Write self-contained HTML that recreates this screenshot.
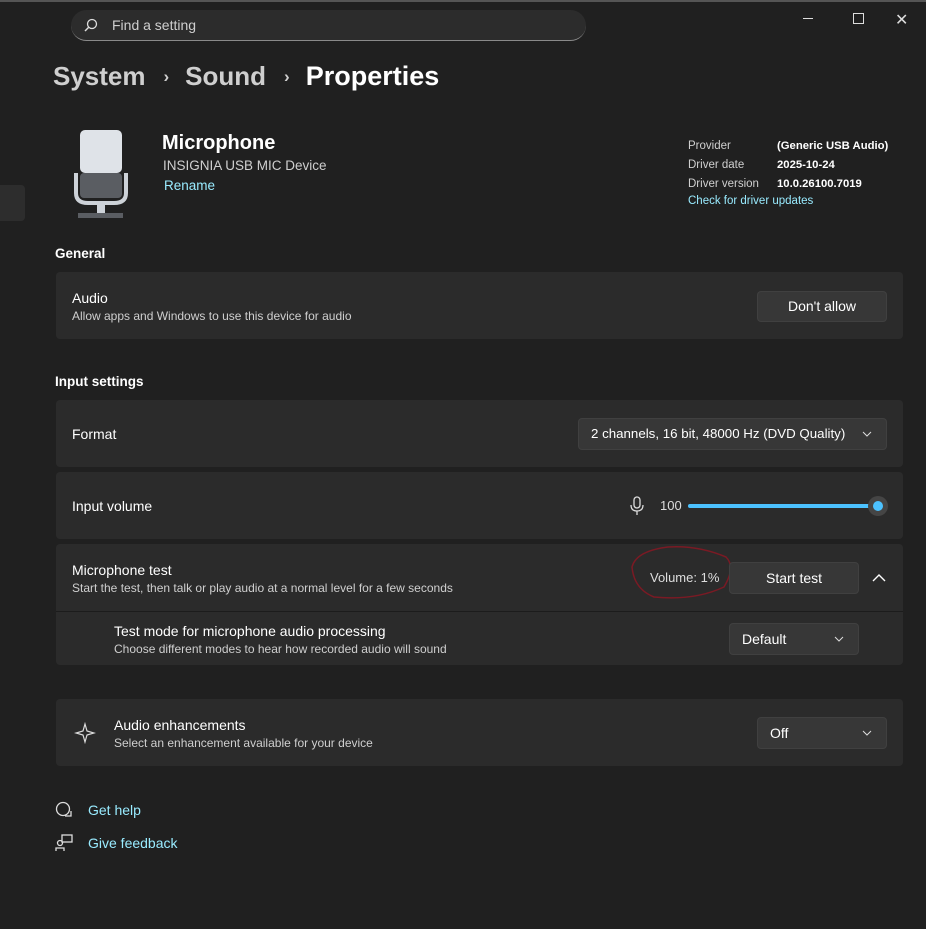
<!DOCTYPE html>
<html><head><style>
body{margin:0;width:926px;height:929px;background:#202020;font-family:"Segoe UI","Liberation Sans",sans-serif;color:#fff;position:relative;overflow:hidden}
.a{position:absolute}
.card{position:absolute;left:56px;width:847px;background:#2b2b2b;border-radius:4px}
.t{font-size:14px;color:#fff}
.s{font-size:12px;color:#cfcfcf}
.btn{position:absolute;background:#373737;border:1px solid #404040;border-radius:4px;font-size:14px;color:#fff;box-sizing:border-box}
.link{color:#99ebff}
.chev{position:absolute;right:14px;top:12px}
</style></head><body>
<div class="a" style="top:0;left:0;width:926px;height:2px;background:#555"></div>
<div class="a" style="left:71px;top:10px;width:515px;height:31px;background:#2c2c2c;border-radius:16px;border-bottom:1px solid #8a8a8a;box-sizing:border-box"></div>
<svg class="a" style="left:84px;top:18px" width="14" height="14"><circle cx="8" cy="6" r="4.5" stroke="#ddd" stroke-width="1.3" fill="none"/><line x1="4.6" y1="9.4" x2="1" y2="13" stroke="#ddd" stroke-width="1.5"/></svg>
<div class="a" style="left:112px;top:17px;font-size:14px;color:#cfcfcf">Find a setting</div>
<div class="a" style="left:803px;top:18px;width:10px;height:1px;background:#ddd"></div>
<div class="a" style="left:853px;top:13px;width:9px;height:9px;border:1px solid #ddd"></div>
<div class="a" style="left:895px;top:10px;font-size:16px;color:#ddd">✕</div>
<div class="a" style="left:53px;top:61px;font-size:26px;font-weight:600;color:#cfcfcf;white-space:nowrap">System<span style="font-size:17px;margin:0 16px 0 18px;vertical-align:3px">›</span>Sound<span style="font-size:17px;margin:0 16px 0 18px;vertical-align:3px">›</span><span style="color:#fff;font-size:27px">Properties</span></div>
<div class="a" style="left:0;top:185px;width:25px;height:36px;background:#2d2d2d;border-radius:0 4px 4px 0"></div>
<svg class="a" style="left:73px;top:128px" width="56" height="92"><rect x="7" y="2" width="42" height="43" rx="5" fill="#dfe3e8"/><rect x="7" y="45" width="42" height="25" rx="4" fill="#5a5d62"/><path d="M3 45 v20 q0 10 12 10 h26 q12 0 12 -10 v-20" stroke="#cdd2d8" stroke-width="4" fill="none"/><rect x="24" y="75" width="8" height="10" fill="#cdd2d8"/><rect x="5" y="85" width="45" height="5" fill="#5a5d62"/></svg>
<div class="a" style="left:162px;top:132px;font-size:20px;font-weight:600">Microphone</div>
<div class="a" style="left:163px;top:158px;font-size:13.5px;color:#cfcfcf">INSIGNIA USB MIC Device</div>
<div class="a link" style="left:164px;top:178px;font-size:13.5px">Rename</div>
<div class="a" style="left:688px;top:137px;line-height:19px;font-size:11.5px;color:#cfcfcf">Provider<br>Driver date<br>Driver version</div>
<div class="a" style="left:777px;top:137px;line-height:19px;font-size:11.3px;font-weight:600">(Generic USB Audio)<br>2025-10-24<br>10.0.26100.7019</div>
<div class="a link" style="left:688px;top:195px;font-size:11.5px">Check for driver updates</div>
<div class="a" style="left:55px;top:246px;font-size:13.5px;font-weight:600">General</div>
<div class="card" style="top:272px;height:67px"></div>
<div class="a t" style="left:72px;top:290px">Audio</div>
<div class="a s" style="left:72px;top:309px">Allow apps and Windows to use this device for audio</div>
<div class="btn" style="left:757px;top:291px;width:130px;height:31px;text-align:center;line-height:29px">Don't allow</div>
<div class="a" style="left:55px;top:374px;font-size:13.5px;font-weight:600">Input settings</div>
<div class="card" style="top:400px;height:67px"></div>
<div class="a t" style="left:72px;top:426px">Format</div>
<div class="btn" style="left:578px;top:418px;width:309px;height:32px;line-height:30px;padding-left:12px;font-size:13.3px">2 channels, 16 bit, 48000 Hz (DVD Quality)<svg class="chev" width="10" height="6"><path d="M1 1 L5 5 L9 1" stroke="#ddd" fill="none"/></svg></div>
<div class="card" style="top:472px;height:67px"></div>
<div class="a t" style="left:72px;top:498px">Input volume</div>
<svg class="a" style="left:629px;top:496px" width="16" height="20"><rect x="5" y="1" width="6" height="11" rx="3" stroke="#ddd" stroke-width="1.3" fill="none"/><path d="M2 9 q0 6 6 6 q6 0 6 -6 M8 15 v4" stroke="#ddd" stroke-width="1.3" fill="none"/></svg>
<div class="a" style="left:660px;top:498px;font-size:13px;color:#ddd">100</div>
<div class="a" style="left:688px;top:504px;width:190px;height:4px;background:#4cc2ff;border-radius:2px"></div>
<div class="a" style="left:868px;top:496px;width:20px;height:20px;border-radius:50%;background:#454545"></div>
<div class="a" style="left:873px;top:501px;width:10px;height:10px;border-radius:50%;background:#4cc2ff"></div>
<div class="card" style="top:544px;height:121px"></div>
<div class="a" style="left:56px;top:611px;width:847px;height:1px;background:#1c1c1c"></div>
<div class="a t" style="left:72px;top:562px">Microphone test</div>
<div class="a s" style="left:72px;top:581px">Start the test, then talk or play audio at a normal level for a few seconds</div>
<svg class="a" style="left:628px;top:543px" width="110" height="62"><path d="M40 4 q30 -2 58 10 q10 10 -2 30 q-30 14 -70 10 q-20 -8 -22 -30 q4 -16 36 -20z" stroke="#7a1a24" stroke-width="1.5" fill="none"/></svg>
<div class="a" style="left:650px;top:570px;font-size:13px;color:#ddd">Volume: 1%</div>
<div class="btn" style="left:729px;top:562px;width:130px;height:32px;text-align:center;line-height:30px">Start test</div>
<svg class="a" style="left:872px;top:574px" width="14" height="8"><path d="M1 7 L7 1 L13 7" stroke="#fff" stroke-width="1.4" fill="none"/></svg>
<div class="a t" style="left:114px;top:623px">Test mode for microphone audio processing</div>
<div class="a s" style="left:114px;top:642px">Choose different modes to hear how recorded audio will sound</div>
<div class="btn" style="left:729px;top:623px;width:130px;height:32px;line-height:30px;padding-left:12px">Default<svg class="chev" width="10" height="6"><path d="M1 1 L5 5 L9 1" stroke="#ddd" fill="none"/></svg></div>
<div class="card" style="top:699px;height:67px"></div>
<svg class="a" style="left:74px;top:722px" width="22" height="22"><path d="M11 2 L13 9 L20 11 L13 13 L11 20 L9 13 L2 11 L9 9Z" stroke="#ddd" stroke-width="1.2" fill="none"/></svg>
<div class="a t" style="left:114px;top:717px">Audio enhancements</div>
<div class="a s" style="left:114px;top:736px">Select an enhancement available for your device</div>
<div class="btn" style="left:757px;top:717px;width:130px;height:32px;line-height:30px;padding-left:12px">Off<svg class="chev" width="10" height="6"><path d="M1 1 L5 5 L9 1" stroke="#ddd" fill="none"/></svg></div>
<svg class="a" style="left:55px;top:801px" width="18" height="18"><circle cx="8" cy="8" r="6.5" stroke="#ddd" stroke-width="1.3" fill="none"/><path d="M10 15 h6 v-5" stroke="#ddd" stroke-width="1.3" fill="none"/></svg>
<div class="a link" style="left:88px;top:802px;font-size:14px">Get help</div>
<svg class="a" style="left:55px;top:834px" width="18" height="18"><rect x="7" y="1" width="10" height="7" stroke="#ddd" stroke-width="1.3" fill="none"/><circle cx="5" cy="9" r="2.5" stroke="#ddd" stroke-width="1.3" fill="none"/><path d="M1 17 v-3 h8 v3" stroke="#ddd" stroke-width="1.3" fill="none"/></svg>
<div class="a link" style="left:88px;top:835px;font-size:14px">Give feedback</div>
</body></html>
